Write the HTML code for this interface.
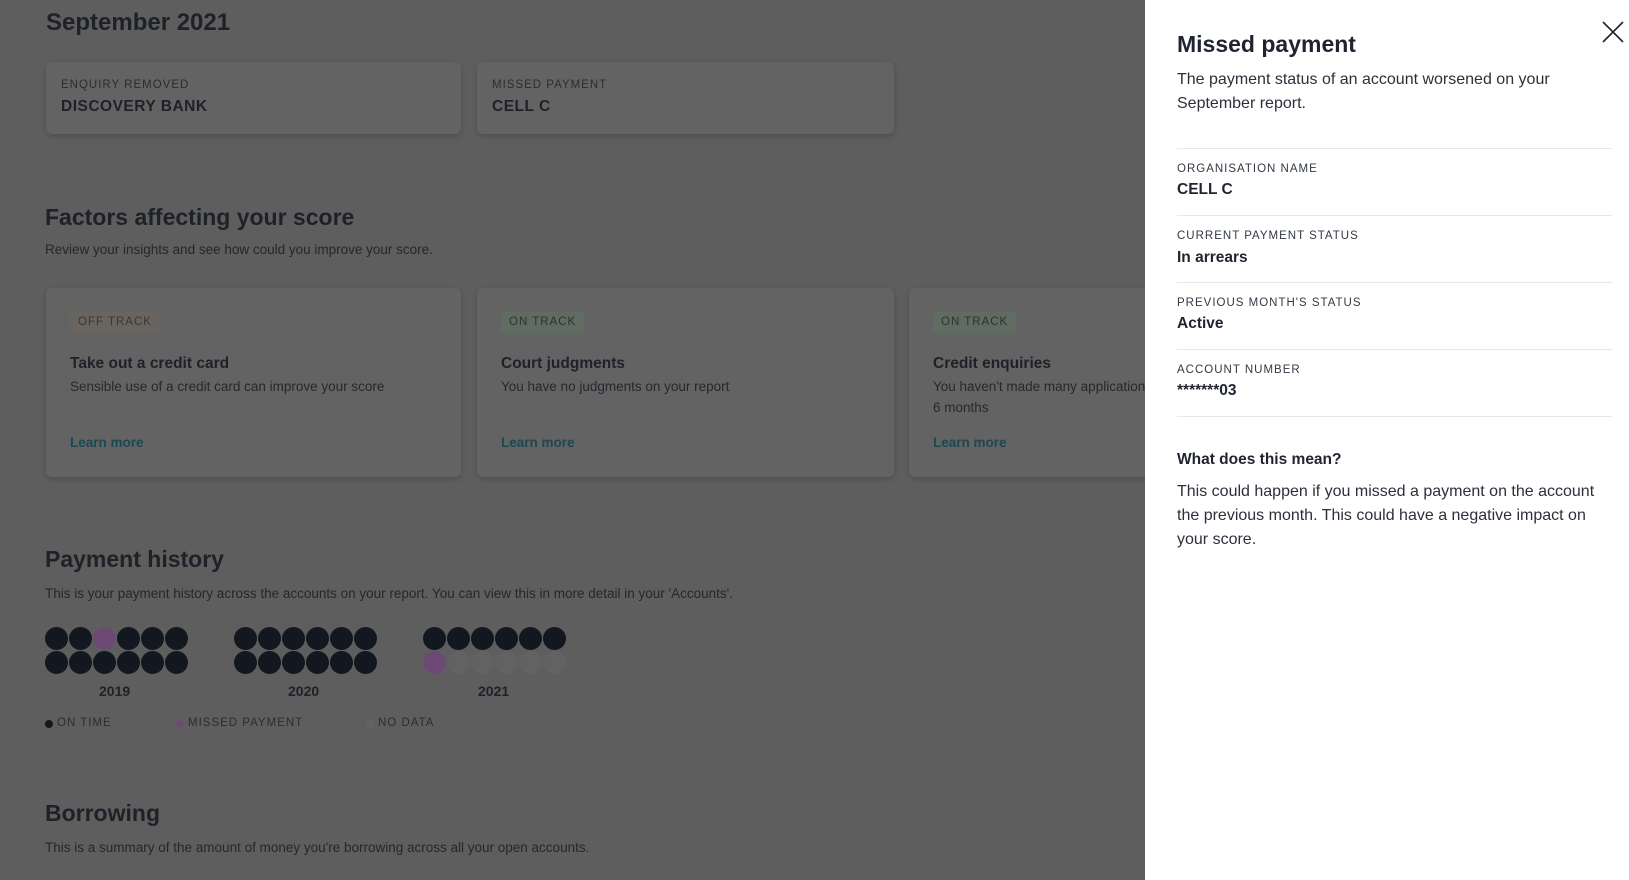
<!DOCTYPE html>
<html><head><meta charset="utf-8"><style>
*{margin:0;padding:0;box-sizing:border-box}
body{width:1629px;height:880px;overflow:hidden;background:#5e5e5e;font-family:"Liberation Sans",sans-serif;color:#1e2128;position:relative}
.a{position:absolute;white-space:nowrap}
.card{position:absolute;background:#636363;border-radius:6px;box-shadow:0 2px 6px rgba(0,0,0,.18)}
.lab{font-size:11.5px;letter-spacing:1px;color:#2a2d33}
.val{font-size:15.5px;font-weight:bold;letter-spacing:.5px}
h2{position:absolute;font-size:23px;font-weight:bold;white-space:nowrap}
.sub{font-size:13.5px;color:#24272d}
.badge{position:absolute;left:24px;top:24px;height:21px;padding:0 8px;font-size:11.5px;letter-spacing:1px;line-height:21px;border-radius:3px}
.ct{position:absolute;left:24px;top:67px;font-size:15.5px;font-weight:bold;white-space:nowrap}
.cd{position:absolute;left:24px;top:88px;font-size:13.5px;color:#25282e;line-height:21px;white-space:nowrap}
.lm{position:absolute;left:24px;top:147px;font-size:13.5px;font-weight:bold;color:#1a4953}
.dot{position:absolute;width:23px;height:23px;border-radius:50%;background:#13171f}
.panel{position:absolute;left:1145px;top:0;width:484px;height:880px;background:#fff;color:#1f2430}
.pl{position:absolute;left:32px;font-size:11.5px;letter-spacing:1px;color:#333a44}
.pv{position:absolute;left:32px;font-size:15.5px;font-weight:bold}
.hr{position:absolute;left:32px;width:435px;height:1px;background:#e6e7ea}
</style></head><body>
<h2 style="left:46px;top:9px;font-size:24px">September 2021</h2>
<div class="card" style="left:46px;top:62px;width:415px;height:72px">
<div class="a lab" style="left:15px;top:17px">ENQUIRY REMOVED</div>
<div class="a val" style="left:15px;top:36px">DISCOVERY BANK</div></div>
<div class="card" style="left:477px;top:62px;width:417px;height:72px">
<div class="a lab" style="left:15px;top:17px">MISSED PAYMENT</div>
<div class="a val" style="left:15px;top:36px">CELL C</div></div>

<h2 style="left:45px;top:204px">Factors affecting your score</h2>
<div class="a sub" style="left:45px;top:242px">Review your insights and see how could you improve your score.</div>

<div class="card" style="left:46px;top:288px;width:415px;height:189px">
<div class="badge" style="background:#696460;color:#3a3631">OFF TRACK</div>
<div class="ct">Take out a credit card</div>
<div class="cd">Sensible use of a credit card can improve your score</div>
<div class="lm">Learn more</div></div>
<div class="card" style="left:477px;top:288px;width:417px;height:189px">
<div class="badge" style="background:#606b62;color:#2a362d">ON TRACK</div>
<div class="ct">Court judgments</div>
<div class="cd">You have no judgments on your report</div>
<div class="lm">Learn more</div></div>
<div class="card" style="left:909px;top:288px;width:417px;height:189px">
<div class="badge" style="background:#606b62;color:#2a362d">ON TRACK</div>
<div class="ct">Credit enquiries</div>
<div class="cd">You haven't made many applications in the last<br>6 months</div>
<div class="lm">Learn more</div></div>

<h2 style="left:45px;top:546px">Payment history</h2>
<div class="a sub" style="left:45px;top:586px">This is your payment history across the accounts on your report. You can view this in more detail in your 'Accounts'.</div>
<div id="dots"></div>
<div class="a" style="left:99px;top:683px;font-size:14px;font-weight:bold">2019</div>
<div class="a" style="left:288px;top:683px;font-size:14px;font-weight:bold">2020</div>
<div class="a" style="left:478px;top:683px;font-size:14px;font-weight:bold">2021</div>
<div class="a" style="left:45px;top:720px;width:8px;height:8px;border-radius:50%;background:#13171f"></div>
<div class="a lab" style="left:57px;top:717px">ON TIME</div>
<div class="a" style="left:176px;top:720px;width:8px;height:8px;border-radius:50%;background:#6d4a75"></div>
<div class="a lab" style="left:188px;top:717px">MISSED PAYMENT</div>
<div class="a" style="left:366px;top:720px;width:8px;height:8px;border-radius:50%;background:#626262"></div>
<div class="a lab" style="left:378px;top:717px">NO DATA</div>

<h2 style="left:45px;top:800px">Borrowing</h2>
<div class="a sub" style="left:45px;top:840px">This is a summary of the amount of money you're borrowing across all your open accounts.</div>

<div class="panel">
<div class="a" style="left:32px;top:31px;font-size:23px;font-weight:bold">Missed payment</div>
<svg class="a" style="left:457px;top:21px" width="22" height="22" viewBox="0 0 22 22"><path d="M1 1L21 21M21 1L1 21" stroke="#1f2430" stroke-width="1.6"/></svg>
<div class="a" style="left:32px;top:68px;font-size:16px;line-height:24px;color:#2b303a">The payment status of an account worsened on your<br>September report.</div>
<div class="hr" style="top:148px"></div>
<div class="pl" style="top:163px">ORGANISATION NAME</div><div class="pv" style="top:181px">CELL C</div>
<div class="hr" style="top:215px"></div>
<div class="pl" style="top:230px">CURRENT PAYMENT STATUS</div><div class="pv" style="top:249px">In arrears</div>
<div class="hr" style="top:282px"></div>
<div class="pl" style="top:297px">PREVIOUS MONTH'S STATUS</div><div class="pv" style="top:315px">Active</div>
<div class="hr" style="top:349px"></div>
<div class="pl" style="top:364px">ACCOUNT NUMBER</div><div class="pv" style="top:382px">*******03</div>
<div class="hr" style="top:416px"></div>
<div class="a" style="left:32px;top:451px;font-size:15.5px;font-weight:bold">What does this mean?</div>
<div class="a" style="left:32px;top:480px;font-size:16px;line-height:24px;color:#2b303a">This could happen if you missed a payment on the account<br>the previous month. This could have a negative impact on<br>your score.</div>
</div>
<script>
var d=document.getElementById('dots'),h='',g=[45,234,423];
for(var k=0;k<3;k++)for(var r=0;r<2;r++)for(var i=0;i<6;i++){
var c='#13171f';if(k==0&&r==0&&i==2)c='#6d4a75';if(k==2&&r==1)c=i==0?'#6d4a75':'#626262';
h+='<div class="dot" style="left:'+(g[k]+i*24)+'px;top:'+(627+r*24)+'px;background:'+c+'"></div>';}
d.innerHTML=h;
</script>
</body></html>
